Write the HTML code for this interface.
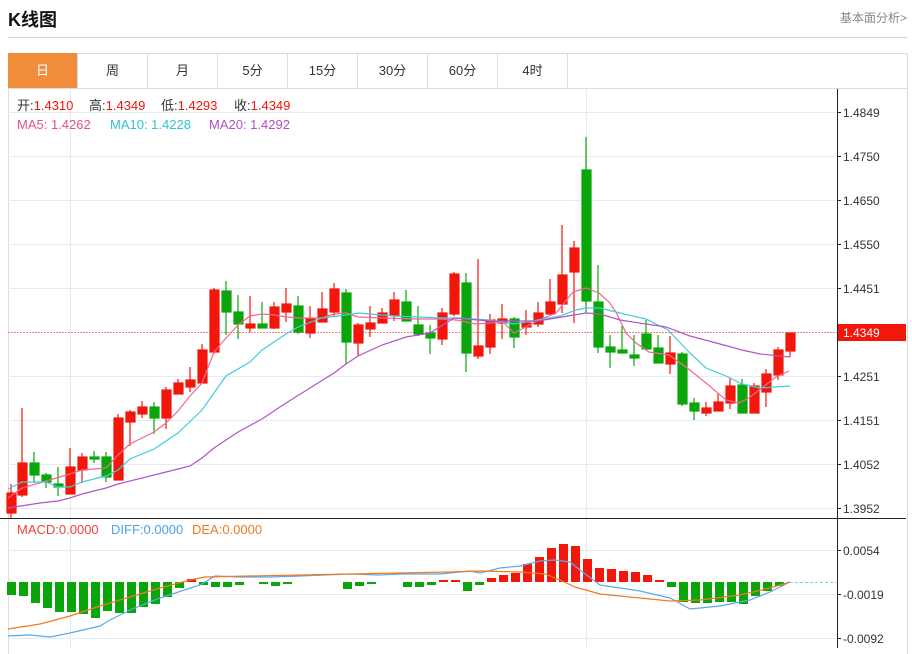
<!DOCTYPE html>
<html><head><meta charset="utf-8"><style>
body{margin:0;width:912px;height:648px;overflow:hidden;background:#fff;font-family:"Liberation Sans","Noto Sans CJK SC",sans-serif;position:relative}
.t{position:absolute;left:8px;top:6px;font-size:18px;font-weight:bold;color:#111}
.r{position:absolute;right:5px;top:9px;font-size:12px;color:#888}
.hl{position:absolute;left:8px;top:37px;width:899px;height:1px;background:#d0d0d0}
.box{position:absolute;left:8px;top:53px;width:898px;height:600px;border:1px solid #ddd;border-bottom:none}
.tabs{position:absolute;left:8px;top:53px;height:35px;width:899px;border-bottom:1px solid #ddd;display:flex}
.tabs div{width:69px;border-right:1px solid #ddd;text-align:center;line-height:35px;font-size:13px;color:#333}
.tabs div.a{background:#f28d3c;color:#fff}
svg{position:absolute;left:0;top:0}
</style></head><body>
<div class="t">K线图</div><div class="r">基本面分析&gt;</div><div class="hl"></div>
<div class="box"></div>
<div class="tabs"><div class="a">日</div><div>周</div><div>月</div><div>5分</div><div>15分</div><div>30分</div><div>60分</div><div>4时</div></div>
<svg width="912" height="648" font-family="Liberation Sans, Noto Sans CJK SC, sans-serif">
<g stroke="#e3ecf3" stroke-width="1">
<line x1="8" x2="837" y1="112.5" y2="112.5"/><line x1="8" x2="837" y1="156.5" y2="156.5"/><line x1="8" x2="837" y1="200.5" y2="200.5"/><line x1="8" x2="837" y1="244.5" y2="244.5"/><line x1="8" x2="837" y1="288.5" y2="288.5"/><line x1="8" x2="837" y1="376.5" y2="376.5"/><line x1="8" x2="837" y1="420.5" y2="420.5"/><line x1="8" x2="837" y1="464.5" y2="464.5"/><line x1="8" x2="837" y1="508.5" y2="508.5"/>
<line x1="8" x2="837" y1="550.5" y2="550.5"/><line x1="8" x2="837" y1="594.5" y2="594.5"/><line x1="8" x2="837" y1="638.5" y2="638.5"/>
<line x1="70.5" x2="70.5" y1="89" y2="648"/><line x1="586.5" x2="586.5" y1="89" y2="648"/>
</g>
<line x1="8" x2="837" y1="332.5" y2="332.5" stroke="#f08080" stroke-dasharray="2,1"/>
<line x1="790" x2="836" y1="582.5" y2="582.5" stroke="#7ccbe8" stroke-dasharray="3,2"/>
<line x1="0" x2="906" y1="518.5" y2="518.5" stroke="#222"/>
<line x1="837.5" x2="837.5" y1="89" y2="648" stroke="#222"/>
<g stroke="#222"><line x1="837" x2="841" y1="112.5" y2="112.5"/><line x1="837" x2="841" y1="156.5" y2="156.5"/><line x1="837" x2="841" y1="200.5" y2="200.5"/><line x1="837" x2="841" y1="244.5" y2="244.5"/><line x1="837" x2="841" y1="288.5" y2="288.5"/><line x1="837" x2="841" y1="376.5" y2="376.5"/><line x1="837" x2="841" y1="420.5" y2="420.5"/><line x1="837" x2="841" y1="464.5" y2="464.5"/><line x1="837" x2="841" y1="508.5" y2="508.5"/><line x1="837" x2="841" y1="550.5" y2="550.5"/><line x1="837" x2="841" y1="594.5" y2="594.5"/><line x1="837" x2="841" y1="638.5" y2="638.5"/></g>
<g font-size="12" fill="#333">
<text x="843" y="117">1.4849</text><text x="843" y="161">1.4750</text><text x="843" y="205">1.4650</text><text x="843" y="249">1.4550</text><text x="843" y="293">1.4451</text><text x="843" y="381">1.4251</text><text x="843" y="425">1.4151</text><text x="843" y="469">1.4052</text><text x="843" y="513">1.3952</text>
<text x="843" y="555">0.0054</text><text x="843" y="599">-0.0019</text><text x="843" y="643">-0.0092</text>
</g>
<rect x="838" y="324" width="68" height="17" fill="#f2170a"/>
<text x="843" y="337" font-size="12" fill="#fff">1.4349</text>
<g font-size="13">
<text x="17" y="110" fill="#333">开:<tspan fill="#f2170a">1.4310</tspan></text>
<text x="89" y="110" fill="#333">高:<tspan fill="#f2170a">1.4349</tspan></text>
<text x="161" y="110" fill="#333">低:<tspan fill="#f2170a">1.4293</tspan></text>
<text x="234" y="110" fill="#333">收:<tspan fill="#f2170a">1.4349</tspan></text>
<text x="17" y="129" fill="#e8507a">MA5: 1.4262</text>
<text x="110" y="129" fill="#2ec3d8">MA10: 1.4228</text>
<text x="209" y="129" fill="#b14fc8">MA20: 1.4292</text>
<text x="17" y="534" fill="#f04040">MACD:0.0000</text>
<text x="111" y="534" fill="#4aa3e8">DIFF:0.0000</text>
<text x="192" y="534" fill="#f07a22">DEA:0.0000</text>
</g>
<g stroke-width="1.2">
<g stroke="#f2170a" fill="#f2170a">
<line x1="11" x2="11" y1="484" y2="518"/><rect x="7" y="493" width="9" height="20"/>
<line x1="22" x2="22" y1="408" y2="497"/><rect x="18" y="463" width="9" height="32"/>
<line x1="70" x2="70" y1="448" y2="494"/><rect x="66" y="467" width="9" height="27"/>
<line x1="82" x2="82" y1="453" y2="483"/><rect x="78" y="457" width="9" height="13"/>
<line x1="118" x2="118" y1="414" y2="480"/><rect x="114" y="418" width="9" height="62"/>
<line x1="130" x2="130" y1="410" y2="446"/><rect x="126" y="412" width="9" height="10"/>
<line x1="142" x2="142" y1="401" y2="418"/><rect x="138" y="407" width="9" height="7"/>
<line x1="166" x2="166" y1="387" y2="429"/><rect x="162" y="390" width="9" height="28"/>
<line x1="178" x2="178" y1="379" y2="394"/><rect x="174" y="383" width="9" height="11"/>
<line x1="190" x2="190" y1="367" y2="392"/><rect x="186" y="380" width="9" height="7"/>
<line x1="202" x2="202" y1="344" y2="383"/><rect x="198" y="350" width="9" height="33"/>
<line x1="214" x2="214" y1="288" y2="354"/><rect x="210" y="290" width="9" height="62"/>
<line x1="250" x2="250" y1="296" y2="332"/><rect x="246" y="324" width="9" height="4"/>
<line x1="274" x2="274" y1="302" y2="329"/><rect x="270" y="307" width="9" height="21"/>
<line x1="286" x2="286" y1="288" y2="322"/><rect x="282" y="304" width="9" height="8"/>
<line x1="310" x2="310" y1="306" y2="338"/><rect x="306" y="319" width="9" height="14"/>
<line x1="322" x2="322" y1="292" y2="322"/><rect x="318" y="309" width="9" height="13"/>
<line x1="334" x2="334" y1="283" y2="317"/><rect x="330" y="289" width="9" height="23"/>
<line x1="358" x2="358" y1="323" y2="356"/><rect x="354" y="325" width="9" height="18"/>
<line x1="370" x2="370" y1="306" y2="337"/><rect x="366" y="323" width="9" height="6"/>
<line x1="382" x2="382" y1="308" y2="323"/><rect x="378" y="313" width="9" height="10"/>
<line x1="394" x2="394" y1="292" y2="321"/><rect x="390" y="300" width="9" height="15"/>
<line x1="442" x2="442" y1="308" y2="345"/><rect x="438" y="313" width="9" height="26"/>
<line x1="454" x2="454" y1="272" y2="316"/><rect x="450" y="274" width="9" height="40"/>
<line x1="478" x2="478" y1="259" y2="359"/><rect x="474" y="346" width="9" height="10"/>
<line x1="490" x2="490" y1="314" y2="354"/><rect x="486" y="320" width="9" height="27"/>
<line x1="502" x2="502" y1="304" y2="339"/><rect x="498" y="319" width="9" height="4"/>
<line x1="526" x2="526" y1="310" y2="335"/><rect x="522" y="323" width="9" height="4"/>
<line x1="538" x2="538" y1="302" y2="327"/><rect x="534" y="313" width="9" height="11"/>
<line x1="550" x2="550" y1="279" y2="314"/><rect x="546" y="302" width="9" height="12"/>
<line x1="562" x2="562" y1="225" y2="313"/><rect x="558" y="275" width="9" height="29"/>
<line x1="574" x2="574" y1="241" y2="323"/><rect x="570" y="248" width="9" height="24"/>
<line x1="670" x2="670" y1="336" y2="374"/><rect x="666" y="353" width="9" height="11"/>
<line x1="706" x2="706" y1="402" y2="416"/><rect x="702" y="408" width="9" height="5"/>
<line x1="718" x2="718" y1="394" y2="411"/><rect x="714" y="402" width="9" height="9"/>
<line x1="730" x2="730" y1="378" y2="409"/><rect x="726" y="386" width="9" height="17"/>
<line x1="754" x2="754" y1="383" y2="413"/><rect x="750" y="386" width="9" height="27"/>
<line x1="766" x2="766" y1="369" y2="407"/><rect x="762" y="374" width="9" height="18"/>
<line x1="778" x2="778" y1="347" y2="380"/><rect x="774" y="350" width="9" height="25"/>
<line x1="790" x2="790" y1="333" y2="357"/><rect x="786" y="333" width="9" height="18"/>
</g>
<g stroke="#0aa50a" fill="#0aa50a">
<line x1="34" x2="34" y1="452" y2="483"/><rect x="30" y="463" width="9" height="12"/>
<line x1="46" x2="46" y1="473" y2="488"/><rect x="42" y="475" width="9" height="7"/>
<line x1="58" x2="58" y1="467" y2="496"/><rect x="54" y="484" width="9" height="3"/>
<line x1="94" x2="94" y1="451" y2="463"/><rect x="90" y="457" width="9" height="2"/>
<line x1="106" x2="106" y1="452" y2="482"/><rect x="102" y="457" width="9" height="20"/>
<line x1="154" x2="154" y1="402" y2="434"/><rect x="150" y="407" width="9" height="11"/>
<line x1="226" x2="226" y1="281" y2="335"/><rect x="222" y="291" width="9" height="21"/>
<line x1="238" x2="238" y1="295" y2="339"/><rect x="234" y="312" width="9" height="12"/>
<line x1="262" x2="262" y1="302" y2="328"/><rect x="258" y="324" width="9" height="4"/>
<line x1="298" x2="298" y1="296" y2="334"/><rect x="294" y="306" width="9" height="26"/>
<line x1="346" x2="346" y1="289" y2="364"/><rect x="342" y="293" width="9" height="49"/>
<line x1="406" x2="406" y1="290" y2="321"/><rect x="402" y="302" width="9" height="19"/>
<line x1="418" x2="418" y1="306" y2="336"/><rect x="414" y="325" width="9" height="9"/>
<line x1="430" x2="430" y1="325" y2="354"/><rect x="426" y="333" width="9" height="5"/>
<line x1="466" x2="466" y1="273" y2="372"/><rect x="462" y="283" width="9" height="70"/>
<line x1="514" x2="514" y1="317" y2="348"/><rect x="510" y="319" width="9" height="18"/>
<line x1="586" x2="586" y1="137" y2="313"/><rect x="582" y="170" width="9" height="131"/>
<line x1="598" x2="598" y1="265" y2="353"/><rect x="594" y="302" width="9" height="45"/>
<line x1="610" x2="610" y1="335" y2="368"/><rect x="606" y="347" width="9" height="5"/>
<line x1="622" x2="622" y1="326" y2="353"/><rect x="618" y="350" width="9" height="3"/>
<line x1="634" x2="634" y1="335" y2="366"/><rect x="630" y="355" width="9" height="3"/>
<line x1="646" x2="646" y1="320" y2="349"/><rect x="642" y="334" width="9" height="15"/>
<line x1="658" x2="658" y1="335" y2="363"/><rect x="654" y="348" width="9" height="15"/>
<line x1="682" x2="682" y1="352" y2="406"/><rect x="678" y="354" width="9" height="50"/>
<line x1="694" x2="694" y1="398" y2="420"/><rect x="690" y="403" width="9" height="8"/>
<line x1="742" x2="742" y1="379" y2="413"/><rect x="738" y="385" width="9" height="28"/>
</g>
</g>
<g fill="none" stroke-width="1.2">
<polyline stroke="#ee6a92" points="8,498 22,488 46,481 70,474 82,470 106,468 118,455 130,444 154,432 166,423 178,411 190,396 202,383 214,352 226,338 238,325 250,316 262,314 274,315 286,317 298,318 322,318 334,314 346,313 358,317 382,318 418,319 442,319 456,320 476,324 503,322 514,333 539,320 556,313 573,292 586,288 599,293 609,302 616,312 626,333 636,343 649,352 669,355 686,367 706,383 726,400 739,403 749,398 763,387 776,377 789,371"/>
<polyline stroke="#45cbe0" points="8,489 22,482 46,482 58,487 70,487 82,482 106,476 118,470 130,459 154,449 178,433 202,410 214,393 226,376 250,362 262,350 286,334 298,327 322,318 346,315 358,313 370,314 394,316 418,317 442,318 456,318 490,320 514,324 538,320 560,316 576,310 586,308 600,308 620,313 646,319 668,330 690,353 706,368 726,376 742,384 760,388 790,386"/>
<polyline stroke="#b155c8" points="8,508 40,503 58,501 70,498 82,494 106,488 118,484 154,475 178,469 190,466 202,458 214,448 238,432 262,419 286,403 310,388 334,373 346,364 358,356 382,345 406,337 430,333 454,318 490,321 538,321 562,317 586,313 600,314 620,320 646,324 666,327 690,336 720,344 742,350 760,354 790,357"/>
</g>
<g fill="#0aa50a">
<rect x="7" y="582" width="9" height="13"/><rect x="19" y="582" width="9" height="14"/><rect x="31" y="582" width="9" height="21"/><rect x="43" y="582" width="9" height="26"/><rect x="55" y="582" width="9" height="30"/><rect x="67" y="582" width="9" height="30"/><rect x="79" y="582" width="9" height="32"/><rect x="91" y="582" width="9" height="36"/><rect x="103" y="582" width="9" height="29"/><rect x="115" y="582" width="9" height="31"/><rect x="127" y="582" width="9" height="31"/><rect x="139" y="582" width="9" height="25"/><rect x="151" y="582" width="9" height="22"/><rect x="163" y="582" width="9" height="15"/><rect x="175" y="582" width="9" height="6"/>
<rect x="199" y="582" width="9" height="3"/><rect x="211" y="582" width="9" height="5"/><rect x="223" y="582" width="9" height="5"/><rect x="235" y="582" width="9" height="3"/><rect x="259" y="582" width="9" height="2"/><rect x="271" y="582" width="9" height="4"/><rect x="283" y="582" width="9" height="2"/>
<rect x="343" y="582" width="9" height="7"/><rect x="355" y="582" width="9" height="4"/><rect x="367" y="582" width="9" height="2"/><rect x="403" y="582" width="9" height="5"/><rect x="415" y="582" width="9" height="5"/><rect x="427" y="582" width="9" height="3"/><rect x="463" y="582" width="9" height="9"/><rect x="475" y="582" width="9" height="3"/>
<rect x="667" y="582" width="9" height="5"/><rect x="679" y="582" width="9" height="20"/><rect x="691" y="582" width="9" height="21"/><rect x="703" y="582" width="9" height="21"/><rect x="715" y="582" width="9" height="20"/><rect x="727" y="582" width="9" height="20"/><rect x="739" y="582" width="9" height="22"/><rect x="751" y="582" width="9" height="14"/><rect x="763" y="582" width="9" height="9"/><rect x="775" y="582" width="9" height="4"/>
</g>
<g fill="#f2170a">
<rect x="187" y="579" width="9" height="3"/><rect x="439" y="580" width="9" height="2"/><rect x="451" y="580" width="9" height="2"/><rect x="487" y="578" width="9" height="4"/><rect x="499" y="575" width="9" height="7"/><rect x="511" y="573" width="9" height="9"/><rect x="523" y="564" width="9" height="18"/><rect x="535" y="557" width="9" height="25"/><rect x="547" y="548" width="9" height="34"/><rect x="559" y="544" width="9" height="38"/><rect x="571" y="546" width="9" height="36"/><rect x="583" y="559" width="9" height="23"/><rect x="595" y="568" width="9" height="14"/><rect x="607" y="569" width="9" height="13"/><rect x="619" y="571" width="9" height="11"/><rect x="631" y="572" width="9" height="10"/><rect x="643" y="575" width="9" height="7"/><rect x="655" y="580" width="9" height="2"/>
</g>
<g fill="none" stroke-width="1.2">
<polyline stroke="#5aaae8" points="8,636 30,635 50,637 70,633 100,626 110,620 130,610 160,598 200,585 215,576 240,577 270,577 300,576 350,574 380,575 400,574 440,574 470,571 480,573 500,568 520,566 540,561 555,560 570,562 580,570 600,585 640,591 670,598 690,609 720,606 750,600 770,592 790,582"/>
<polyline stroke="#f07a22" points="8,629 40,624 70,616 100,606 130,597 160,588 190,580 205,577 250,576 300,575 350,574 400,573 450,572 480,571 520,572 545,574 560,580 575,587 600,594 640,598 670,601 700,600 740,595 770,588 790,582"/>
</g>
</svg>
</body></html>
